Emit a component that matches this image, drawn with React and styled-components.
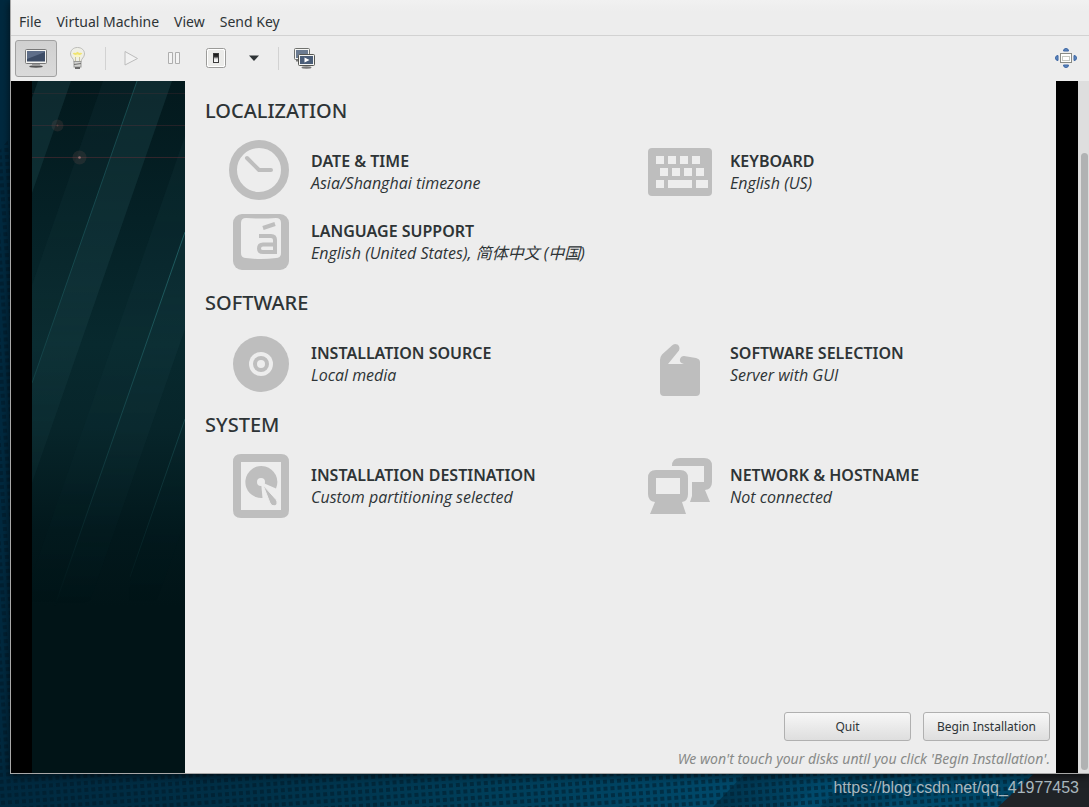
import React from "react";
import styled, { createGlobalStyle, css } from "styled-components";

const GlobalStyle = createGlobalStyle`
  *, *::before, *::after { box-sizing: border-box; }
  html, body { margin: 0; padding: 0; }
  body {
    font-family: "Noto Sans", "Open Sans", "Noto Sans CJK SC", sans-serif;
    color: #2e3436;
  }
  button { font: inherit; color: inherit; border: 0; background: none; padding: 0; margin: 0; }
`;

const Desktop = styled.div`
  position: relative;
  min-height: 100vh;
  display: flex;
  flex-direction: column;
  padding-left: 10px;
  overflow: hidden;
  background: #002a3f;
`;

const Wallpaper = styled.svg`
  position: absolute;
  inset: 0;
  width: 100%;
  height: 100%;
`;

const Window = styled.div`
  position: relative;
  flex: 1;
  display: flex;
  flex-direction: column;
  background: #ededed;
  border-left: 1px solid #a8a8a8;
  border-bottom: 1px solid #a8a8a8;
  box-shadow: 0 2px 8px rgba(0, 0, 0, 0.65);
`;

const MenuBar = styled.nav`
  display: flex;
  align-items: center;
  gap: 15px;
  height: 36px;
  padding: 8px 8px 0;
  border-bottom: 1px solid #d2d2d2;
  background: linear-gradient(#f1f1f1, #ededed 12px);
  font-size: 14px;
  line-height: 20px;
`;

const MenuItem = styled.button`
  white-space: nowrap;
`;

const ToolBar = styled.div`
  display: flex;
  align-items: center;
  height: 45px;
  padding: 4px 2px 4px 4px;
`;

const ToolButton = styled.button`
  display: flex;
  align-items: center;
  justify-content: center;
  width: ${(p) => (p.$narrow ? 36 : 42)}px;
  height: 37px;
  padding-bottom: 2px;
  border-radius: 3px;
  ${(p) =>
    p.$pressed &&
    css`
      border: 1px solid #a1a1a1;
      background: linear-gradient(#d0d0d0, #dadada);
    `}
  ${(p) => p.$end && "margin-left: auto;"}
`;

const Separator = styled.div`
  width: 1px;
  height: 23px;
  margin: 0 4px 0 6px;
  background: #d2d2d2;
`;

const Viewport = styled.div`
  flex: 1;
  display: flex;
  background: #000;
  padding-left: 21px;
`;

const SideBanner = styled.aside`
  flex: 0 0 153px;
  background: #011417;
  overflow: hidden;
`;

const BannerArt = styled.svg`
  display: block;
`;

const Hub = styled.main`
  flex: 1;
  min-width: 0;
  display: flex;
  flex-direction: column;
  padding: 17px 6px 4px 20px;
  margin-right: 22px;
  background: #ededed;
`;

const Category = styled.section`
  padding-bottom: 13px;
`;

const CategoryTitle = styled.h2`
  margin: 0 0 13px;
  font-size: 20px;
  line-height: 26px;
  font-weight: 500;
`;

const SpokeGrid = styled.div`
  display: grid;
  grid-template-columns: 1fr 1fr;
  column-gap: 17px;
  padding-left: 24px;
`;

const Spoke = styled.button`
  display: flex;
  align-items: center;
  gap: 18px;
  height: 70px;
  text-align: left;
`;

const SpokeText = styled.span`
  display: flex;
  flex-direction: column;
  white-space: nowrap;
`;

const SpokeName = styled.span`
  font-size: 16px;
  line-height: 22px;
  font-weight: 600;
`;

const SpokeStatus = styled.span`
  font-family: "Open Sans", "Noto Sans CJK SC", sans-serif;
  font-size: 16px;
  line-height: 22px;
  font-style: italic;
`;

const Footer = styled.footer`
  margin-top: auto;
  display: flex;
  flex-direction: column;
  align-items: flex-end;
  gap: 8px;
`;

const Actions = styled.div`
  display: grid;
  grid-template-columns: 127px 127px;
  gap: 12px;
`;

const ActionButton = styled.button`
  height: 29px;
  border: 1px solid #b0b0b0;
  border-radius: 3px;
  background: linear-gradient(#f7f7f7, #dedede);
  font-size: 12px;
  line-height: 20px;
  white-space: nowrap;
`;

const Note = styled.p`
  margin: 0;
  color: #888a88;
  font-size: 14px;
  line-height: 20px;
  font-style: italic;
  white-space: nowrap;
`;

const ScrollTrack = styled.div`
  display: flex;
  width: 11px;
  padding: 72px 1px 3px 3px;
  background: #dedede;
`;

const ScrollThumb = styled.div`
  flex: 1;
  border-radius: 4px;
  background: #b0b2b3;
`;

const Strip = styled.div`
  position: relative;
  display: flex;
  justify-content: flex-end;
  align-items: center;
  height: 33px;
  padding: 0 10px 6px;
  font-family: "Liberation Sans", Arial, sans-serif;
  font-size: 16px;
  line-height: 20px;
  color: #a9b7be;
`;

const DesktopArt = () => (
  <Wallpaper viewBox="0 0 1089 807" preserveAspectRatio="xMaxYMax slice" aria-hidden="true">
    <defs>
      <linearGradient id="sea" x1="0" x2="1" y1="0" y2="0">
        <stop offset="0" stopColor="#00293f" />
        <stop offset="0.2" stopColor="#002f46" />
        <stop offset="0.45" stopColor="#003e59" />
        <stop offset="0.7" stopColor="#004a6c" />
        <stop offset="1" stopColor="#004767" />
      </linearGradient>
      <linearGradient id="fold" x1="0" x2="1" y1="0" y2="0">
        <stop offset="0" stopColor="#001f30" stopOpacity="0.55" />
        <stop offset="1" stopColor="#001f30" stopOpacity="0" />
      </linearGradient>
      <pattern id="dots" width="7" height="7" patternUnits="userSpaceOnUse" patternTransform="rotate(-4)">
        <rect x="1" y="1" width="4" height="4" fill="#001726" fillOpacity="0.5" />
      </pattern>
    </defs>
    <rect width="1089" height="807" fill="url(#sea)" />
    <path d="M0 150L12 135V807H0zM0 770H1089V807H0z" fill="url(#dots)" />
    <path d="M713 807L748 770H830L795 807z" fill="url(#fold)" />
    <path d="M820 807L855 770H920L885 807z" fill="url(#fold)" opacity="0.6" />
    <path d="M998 807L1038 770H1089V807z" fill="#202327" />
  </Wallpaper>
);

const BannerDrawing = () => (
  <BannerArt width="153" height="692" viewBox="0 0 153 692" aria-hidden="true">
    <defs>
      <linearGradient id="depth" x1="0" x2="0" y1="0" y2="1">
        <stop offset="0" stopColor="#03191d" />
        <stop offset="0.2" stopColor="#052126" />
        <stop offset="0.38" stopColor="#08292e" />
        <stop offset="0.5" stopColor="#07252a" />
        <stop offset="0.65" stopColor="#02181c" />
        <stop offset="0.76" stopColor="#011417" />
      </linearGradient>
      <linearGradient id="fade" x1="0" x2="0" y1="0" y2="1">
        <stop offset="0" stopColor="#fff" />
        <stop offset="0.3" stopColor="#ccc" />
        <stop offset="0.5" stopColor="#777" />
        <stop offset="0.76" stopColor="#000" />
      </linearGradient>
      <mask id="fadeMask">
        <rect width="153" height="692" fill="url(#fade)" />
      </mask>
    </defs>
    <rect width="153" height="692" fill="url(#depth)" />
    <g mask="url(#fadeMask)">
      <g fill="#245058">
        <path d="M6 0H39L0 112V17z" opacity="0.32" />
        <path d="M71 0H105L0 302V204z" opacity="0.13" />
        <path d="M105 0H140L0 402V302z" opacity="0.32" />
        <path d="M153 55V151L20 533L-20 552z" opacity="0.14" />
        <path d="M153 151V248L58 520L20 533z" opacity="0.24" />
        <path d="M153 338V440L90 620L98 500z" opacity="0.1" />
      </g>
      <g stroke="#2a7478" strokeWidth="1" fill="none">
        <path d="M105 0L0 302" opacity="0.5" />
        <path d="M153 151L20 533" opacity="0.8" />
        <path d="M153 338L98 496" opacity="0.8" />
      </g>
    </g>
    <g fill="#6a3038" opacity="0.45">
      <rect y="12" width="153" height="1" opacity="0.5" />
      <rect y="44" width="153" height="1" opacity="0.7" />
      <rect y="76" width="153" height="1" />
    </g>
    <g fill="#7c5450">
      <circle cx="25.500" cy="44.500" r="6" opacity="0.2" />
      <circle cx="47.500" cy="76.500" r="7" opacity="0.2" />
      <circle cx="25.500" cy="44.500" r="1" opacity="0.5" />
      <circle cx="47.500" cy="76.500" r="1.300" fill="#b08080" opacity="0.7" />
    </g>
  </BannerArt>
);

const GREY = "#bebebe";
const PAPER = "#ededed";

const SpokeIcon = ({ children }) => (
  <svg width="64" height="64" viewBox="0 0 64 64" fill={GREY} aria-hidden="true">
    {children}
  </svg>
);

const ClockIcon = () => (
  <SpokeIcon>
    <circle cx="30" cy="30" r="26" fill="none" stroke={GREY} strokeWidth="8" />
    <path d="M18 18L30 30H42" fill="none" stroke={GREY} strokeWidth="4" strokeLinecap="round" strokeLinejoin="round" />
  </SpokeIcon>
);

const LanguageIcon = () => (
  <SpokeIcon>
    <rect x="4" y="4" width="56" height="56" rx="9" />
    <path d="M17 8Q32 9 47 8Q52 8 52 13V43Q52 48 47 48Q32 50 17 48Q12 48 12 43V13Q12 8 17 8z" fill={PAPER} />
    <path d="M34 18L46 14" fill="none" stroke={GREY} strokeWidth="4" />
    <path d="M30 26H42Q46 26 46 30V42H34Q30 42 30 38.500Q30 34.500 34 34.500H46" fill="none" stroke={GREY} strokeWidth="4" />
  </SpokeIcon>
);

const KeyboardIcon = () => (
  <SpokeIcon>
    <rect y="8" width="64" height="48" rx="4" />
    <path
      fill={PAPER}
      d="M8 16h8v8h-8zM20 16h8v8h-8zM32 16h8v8h-8zM44 16h8v8h-8zM12 28h8v8h-8zM24 28h8v8h-8zM36 28h8v8h-8zM48 28h8v8h-8zM8 40h8v8h-8zM20 40h24v8h-24zM48 40h12v8h-12z"
    />
  </SpokeIcon>
);

const DiscIcon = () => (
  <SpokeIcon>
    <circle cx="32" cy="32" r="28" />
    <circle cx="32" cy="32" r="12" fill={PAPER} />
    <circle cx="32" cy="32" r="8" />
    <circle cx="32" cy="32" r="4" fill={PAPER} />
  </SpokeIcon>
);

const PackageIcon = () => (
  <SpokeIcon>
    <path d="M12 32V28Q12 25 14 22.500L24 13.500Q26 11 29.500 12.500Q32.500 15 31 18.500L20 32H36Q31 31 32 27Q33 24 36 24L48 26Q52 27 52 30V60Q52 64 48 64H16Q12 64 12 60z" />
  </SpokeIcon>
);

const DriveIcon = () => (
  <SpokeIcon>
    <path fillRule="evenodd" d="M12 0H52Q60 0 60 8V56Q60 64 52 64H12Q4 64 4 56V8Q4 0 12 0zM12 8V56H52V8z" />
    <path d="M32 28L47 34.500A16 16 0 1 0 33.500 44z" />
    <circle cx="32" cy="28" r="4" fill={PAPER} />
    <path d="M34 31L47 45.500Q49.500 50 46 51.800Q42.500 52.500 41 49z" stroke={PAPER} strokeWidth="1" />
  </SpokeIcon>
);

const NetworkIcon = () => (
  <SpokeIcon>
    <path d="M24 12Q24 4 32 4H56Q64 4 64 12V28Q64 35 57 36L62 48H42L44 42V28H56V12z" />
    <path fillRule="evenodd" d="M8 16H32Q40 16 40 24V40Q40 47 34 48L38 60H2L7 48Q0 47 0 40V24Q0 16 8 16zM8 24V40H32V24z" />
  </SpokeIcon>
);

const ConsoleIcon = () => (
  <svg width="24" height="24" viewBox="0 0 24 24" aria-hidden="true">
    <ellipse cx="12" cy="20.500" rx="7" ry="1.500" fill="#777" />
    <path d="M8 16h8v4H8z" fill="#999" />
    <rect x="1.500" y="3.500" width="21" height="14" rx="1" fill="#f4f4f2" stroke="#777" />
    <rect x="3" y="5" width="18" height="10.500" fill="#3d4c66" />
    <path d="M3 5H21V6L3 13z" fill="#7686a0" opacity="0.6" />
    <path d="M6 20.500h12" stroke="#555" />
  </svg>
);

const BulbIcon = () => (
  <svg width="24" height="24" viewBox="0 0 24 24" aria-hidden="true">
    <path d="M11.500 1.500C7 1.500 4.500 4.500 4.500 8C4.500 11.500 8 12.500 8 16H15C15 12.500 18.500 11.500 18.500 8C18.500 4.500 16 1.500 11.500 1.500z" fill="#efefe6" stroke="#bcbcb8" />
    <path d="M7.500 7Q9 9 11.500 7Q14 9 15.500 7" fill="none" stroke="#f0e470" strokeWidth="2" />
    <path d="M8.500 10H14.500" stroke="#faf6c0" strokeWidth="2" />
    <path d="M9.500 11V15M13.500 11V15" stroke="#c9c4a0" />
    <rect x="8" y="15.500" width="7" height="5.500" fill="#d4d4d2" stroke="#9a9a98" />
    <path d="M8 18.500L15 17.500" stroke="#6f6f6d" />
    <path d="M9 22h5" stroke="#6a6a6a" strokeWidth="2" />
  </svg>
);

const PlayIcon = () => (
  <svg width="24" height="24" viewBox="0 0 24 24" aria-hidden="true">
    <path d="M6 5.500L18.500 12.500L6 19z" fill="#f2f2f2" stroke="#bcbcbc" strokeLinejoin="round" />
  </svg>
);

const PauseIcon = () => (
  <svg width="24" height="24" viewBox="0 0 24 24" aria-hidden="true">
    <path d="M7.500 6.500h4v11h-4zM14.500 6.500h4v11h-4z" fill="#f4f4f4" stroke="#aeaeae" />
  </svg>
);

const PowerIcon = () => (
  <svg width="24" height="24" viewBox="0 0 24 24" aria-hidden="true">
    <defs>
      <linearGradient id="rocker" x1="0" x2="0" y1="0" y2="1">
        <stop offset="0" stopColor="#111" />
        <stop offset="0.35" stopColor="#333" />
        <stop offset="0.6" stopColor="#e8e8e8" />
        <stop offset="1" stopColor="#fff" />
      </linearGradient>
    </defs>
    <rect x="3.500" y="2.500" width="19" height="19" rx="2" fill="#fff" stroke="#9b9b99" />
    <rect x="5" y="4" width="16" height="16" rx="1" fill="#ececea" />
    <rect x="10.500" y="7.500" width="5" height="9" fill="url(#rocker)" stroke="#3c3c3c" />
  </svg>
);

const CaretIcon = () => (
  <svg width="10" height="6" viewBox="0 0 10 6" aria-hidden="true">
    <path d="M0 0.500H10L5 6z" fill="#2e3436" />
  </svg>
);

const SnapshotIcon = () => (
  <svg width="24" height="24" viewBox="0 0 24 24" aria-hidden="true">
    <rect x="2.500" y="2.500" width="15" height="11" rx="1" fill="#f4f4f2" stroke="#6f716e" />
    <rect x="4" y="4" width="12" height="8" fill="#6b7b91" />
    <path d="M4 14.500H7" stroke="#777" strokeWidth="2" />
    <ellipse cx="14.500" cy="21.500" rx="5" ry="1.200" fill="#777" />
    <rect x="6.500" y="8.500" width="16" height="11" rx="1" fill="#f4f4f2" stroke="#555753" />
    <rect x="8" y="10" width="13" height="8" fill="#4a5d78" />
    <path d="M12.500 11.500L17.500 14L12.500 16.500z" fill="#fff" />
  </svg>
);

const FullscreenIcon = () => (
  <svg width="24" height="24" viewBox="0 0 24 24" aria-hidden="true">
    <g fill="#5f88c0" stroke="#3a64a2">
      <path d="M9.500 5Q9.500 2.500 12 2.500Q14.500 2.500 14.500 5z" />
      <path d="M9.500 19Q9.500 21.500 12 21.500Q14.500 21.500 14.500 19z" />
      <path d="M4 9.500Q1.500 9.500 1.500 12Q1.500 14.500 4 14.500z" />
      <path d="M20 9.500Q22.500 9.500 22.500 12Q22.500 14.500 20 14.500z" />
    </g>
    <rect x="6.500" y="7.500" width="11" height="9" fill="#fdfdfb" stroke="#888a85" />
    <rect x="8.500" y="10.500" width="7" height="4" fill="#fff" stroke="#c5c7c0" />
  </svg>
);

const MENUS = ["File", "Virtual Machine", "View", "Send Key"];

const CATEGORIES = [
  {
    title: "LOCALIZATION",
    spokes: [
      { name: "DATE & TIME", status: "Asia/Shanghai timezone", Icon: ClockIcon },
      { name: "KEYBOARD", status: "English (US)", Icon: KeyboardIcon },
      { name: "LANGUAGE SUPPORT", status: "English (United States), 简体中文 (中国)", Icon: LanguageIcon },
    ],
  },
  {
    title: "SOFTWARE",
    spokes: [
      { name: "INSTALLATION SOURCE", status: "Local media", Icon: DiscIcon },
      { name: "SOFTWARE SELECTION", status: "Server with GUI", Icon: PackageIcon },
    ],
  },
  {
    title: "SYSTEM",
    spokes: [
      { name: "INSTALLATION DESTINATION", status: "Custom partitioning selected", Icon: DriveIcon },
      { name: "NETWORK & HOSTNAME", status: "Not connected", Icon: NetworkIcon },
    ],
  },
];

export default function App() {
  return (
    <>
      <GlobalStyle />
      <Desktop>
        <DesktopArt />
        <Window>
          <MenuBar>
            {MENUS.map((m) => (
              <MenuItem key={m} type="button">{m}</MenuItem>
            ))}
          </MenuBar>
          <ToolBar role="toolbar">
            <ToolButton type="button" $pressed aria-label="Console"><ConsoleIcon /></ToolButton>
            <ToolButton type="button" aria-label="Details"><BulbIcon /></ToolButton>
            <Separator />
            <ToolButton type="button" aria-label="Run"><PlayIcon /></ToolButton>
            <ToolButton type="button" aria-label="Pause"><PauseIcon /></ToolButton>
            <ToolButton type="button" aria-label="Shut down"><PowerIcon /></ToolButton>
            <ToolButton type="button" $narrow aria-label="Shut down options"><CaretIcon /></ToolButton>
            <Separator />
            <ToolButton type="button" aria-label="Snapshots"><SnapshotIcon /></ToolButton>
            <ToolButton type="button" $end aria-label="Full screen"><FullscreenIcon /></ToolButton>
          </ToolBar>
          <Viewport>
            <SideBanner><BannerDrawing /></SideBanner>
            <Hub>
              {CATEGORIES.map(({ title, spokes }) => (
                <Category key={title}>
                  <CategoryTitle>{title}</CategoryTitle>
                  <SpokeGrid>
                    {spokes.map(({ name, status, Icon }) => (
                      <Spoke key={name} type="button">
                        <Icon />
                        <SpokeText>
                          <SpokeName>{name}</SpokeName>
                          <SpokeStatus>{status}</SpokeStatus>
                        </SpokeText>
                      </Spoke>
                    ))}
                  </SpokeGrid>
                </Category>
              ))}
              <Footer>
                <Actions>
                  <ActionButton type="button">Quit</ActionButton>
                  <ActionButton type="button">Begin Installation</ActionButton>
                </Actions>
                <Note>We won't touch your disks until you click 'Begin Installation'.</Note>
              </Footer>
            </Hub>
            <ScrollTrack><ScrollThumb /></ScrollTrack>
          </Viewport>
        </Window>
        <Strip>https://blog.csdn.net/qq_41977453</Strip>
      </Desktop>
    </>
  );
}
